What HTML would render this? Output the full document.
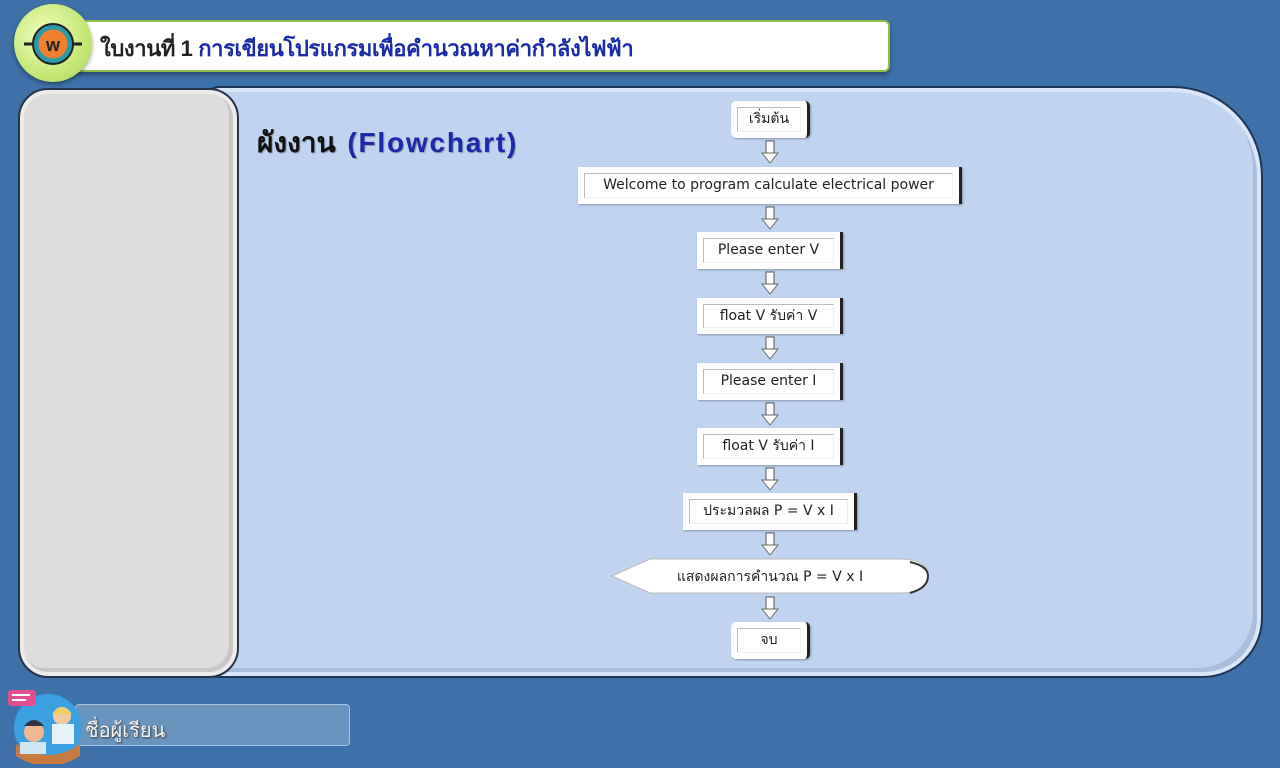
<!DOCTYPE html>
<html><head><meta charset="utf-8"><style>
*{margin:0;padding:0;box-sizing:border-box}
body{width:1280px;height:768px;overflow:hidden;background:#3d71a7;position:relative;font-family:"Liberation Sans","Noto Sans CJK SC",sans-serif}
.abs{position:absolute}
.main{left:200px;top:86px;width:1063px;height:592px;background:#c0d4f2;border-radius:20px 90px 60px 20px;border:2px solid #1e3558;box-shadow:inset 0 0 0 4px #d9e6f8,inset -6px -6px 0 2px #a9bedc}
.grey{left:18px;top:88px;width:221px;height:590px;background:#dfdcdc;border-radius:30px;border:2px solid #27354a;box-shadow:inset 0 0 0 4px #ececec,inset -3px -3px 0 5px #c8c6c6}
.title{left:60px;top:20px;width:830px;height:52px;background:#fff;border:2px solid #8fbf4a;border-radius:6px;box-shadow:0 3px 4px rgba(0,0,0,.35)}
.ttxt{left:100px;top:31px;font-size:22px;font-weight:bold;color:#222;letter-spacing:-0.4px}
.ttxt span{color:#1a2aa8}
.logo{left:14px;top:4px;width:78px;height:78px;border-radius:50%;background:radial-gradient(circle at 40% 40%,#f4ffc0,#bde46c 70%,#93c24a);box-shadow:0 2px 4px rgba(0,0,0,.4)}
.box{position:absolute;background:#fff;border-right:3px solid #222;box-shadow:1px 1px 2px rgba(0,0,0,.3);font-size:15px;color:#222;text-align:center;font-family:"DejaVu Sans","Noto Sans CJK SC",sans-serif}
.box .in{position:absolute;left:6px;right:6px;top:6px;bottom:6px;border:1px solid #bbb;border-right-color:#eee;border-bottom-color:#eee;line-height:22px;white-space:nowrap;font-size:14px}
.name{left:75px;top:704px;width:275px;height:42px;background:rgba(160,190,220,.45);border:1px solid #a8c4e0;border-radius:4px}
</style></head><body>
<div class="abs main"></div>
<div class="abs grey"></div>
<div class="abs title"></div>
<div class="abs logo"><svg width="78" height="78" viewBox="0 0 78 78"><line x1="10" y1="40" x2="68" y2="40" stroke="#222" stroke-width="3"/><circle cx="39" cy="40" r="17" fill="#f08030" stroke="#2a9aa8" stroke-width="5"/><circle cx="39" cy="40" r="20" fill="none" stroke="#222" stroke-width="2"/><text x="39" y="47" font-size="18" font-weight="bold" text-anchor="middle" fill="#222" font-family="Liberation Sans">w</text></svg></div>
<div class="abs ttxt">ใบงานที่ 1 <span>การเขียนโปรแกรมเพื่อคำนวณหาค่ากำลังไฟฟ้า</span></div>
<div class="abs" style="left:257px;top:121px;font-size:28px;font-weight:bold;color:#111;text-shadow:1px 1px 1px rgba(0,0,0,.3)">ผังงาน <span style="color:#1a2aa8;letter-spacing:1.8px;margin-left:4px">(Flowchart)</span></div>

<div class="box" style="left:731px;top:101px;width:79px;height:37px;border-radius:5px"><div class="in">เริ่มต้น</div></div>
<div class="box" style="left:578px;top:167px;width:384px;height:37px"><div class="in">Welcome to program calculate electrical power</div></div>
<div class="box" style="left:697px;top:232px;width:146px;height:37px"><div class="in">Please enter V</div></div>
<div class="box" style="left:697px;top:298px;width:146px;height:36px"><div class="in">float V รับค่า V</div></div>
<div class="box" style="left:697px;top:363px;width:146px;height:37px"><div class="in">Please enter I</div></div>
<div class="box" style="left:697px;top:428px;width:146px;height:37px"><div class="in">float V รับค่า I</div></div>
<div class="box" style="left:683px;top:493px;width:174px;height:37px"><div class="in">ประมวลผล P = V x I</div></div>
<svg class="abs" style="left:610px;top:556px" width="322" height="42"><path d="M2 20 L40 3 H290 Q318 3 318 20 Q318 37 290 37 H40 Z" fill="#fff" stroke="#bbb"/><path d="M300 6 Q318 10 318 20 Q318 32 300 37" fill="none" stroke="#333" stroke-width="2"/><text x="160" y="25" text-anchor="middle" font-size="14" fill="#222" font-family="DejaVu Sans,Noto Sans CJK SC,sans-serif">แสดงผลการคำนวณ P = V x I</text></svg>
<div class="box" style="left:731px;top:622px;width:79px;height:37px;border-radius:5px"><div class="in">จบ</div></div>

<svg class="abs" style="left:0;top:0" width="1280" height="768">
<defs><g id="a"><rect x="-4" y="0" width="8" height="13" fill="#fff" stroke="#555" stroke-width="1"/><path d="M-8 12 L8 12 L0 22 Z" fill="#fff" stroke="#666" stroke-width="1"/></g></defs>
<use href="#a" x="770" y="141"/><use href="#a" x="770" y="207"/><use href="#a" x="770" y="272"/><use href="#a" x="770" y="337"/><use href="#a" x="770" y="403"/><use href="#a" x="770" y="468"/><use href="#a" x="770" y="533"/><use href="#a" x="770" y="597"/>
</svg>

<div class="abs name"></div>
<div class="abs" style="left:85px;top:714px;font-size:20px;color:#f2f2f2;text-shadow:1px 1px 2px #333">ชื่อผู้เรียน</div>
<svg class="abs" style="left:6px;top:686px" width="76" height="78"><circle cx="42" cy="42" r="34" fill="#3aa0e0"/><path d="M10 58 Q42 80 74 58 L74 70 Q42 90 10 70Z" fill="#c87a40"/><circle cx="28" cy="46" r="10" fill="#f0b890"/><path d="M18 40 Q28 28 38 40Z" fill="#334"/><circle cx="56" cy="30" r="9" fill="#f5c9a0"/><path d="M46 28 Q56 14 66 28" fill="#f0d060"/><rect x="14" y="56" width="26" height="12" fill="#cfe6f5"/><rect x="46" y="38" width="22" height="20" fill="#e6f2fa"/><rect x="2" y="4" width="28" height="16" rx="3" fill="#e05090"/><rect x="6" y="8" width="18" height="2" fill="#fff"/><rect x="6" y="13" width="14" height="2" fill="#fff"/></svg>
</body></html>
